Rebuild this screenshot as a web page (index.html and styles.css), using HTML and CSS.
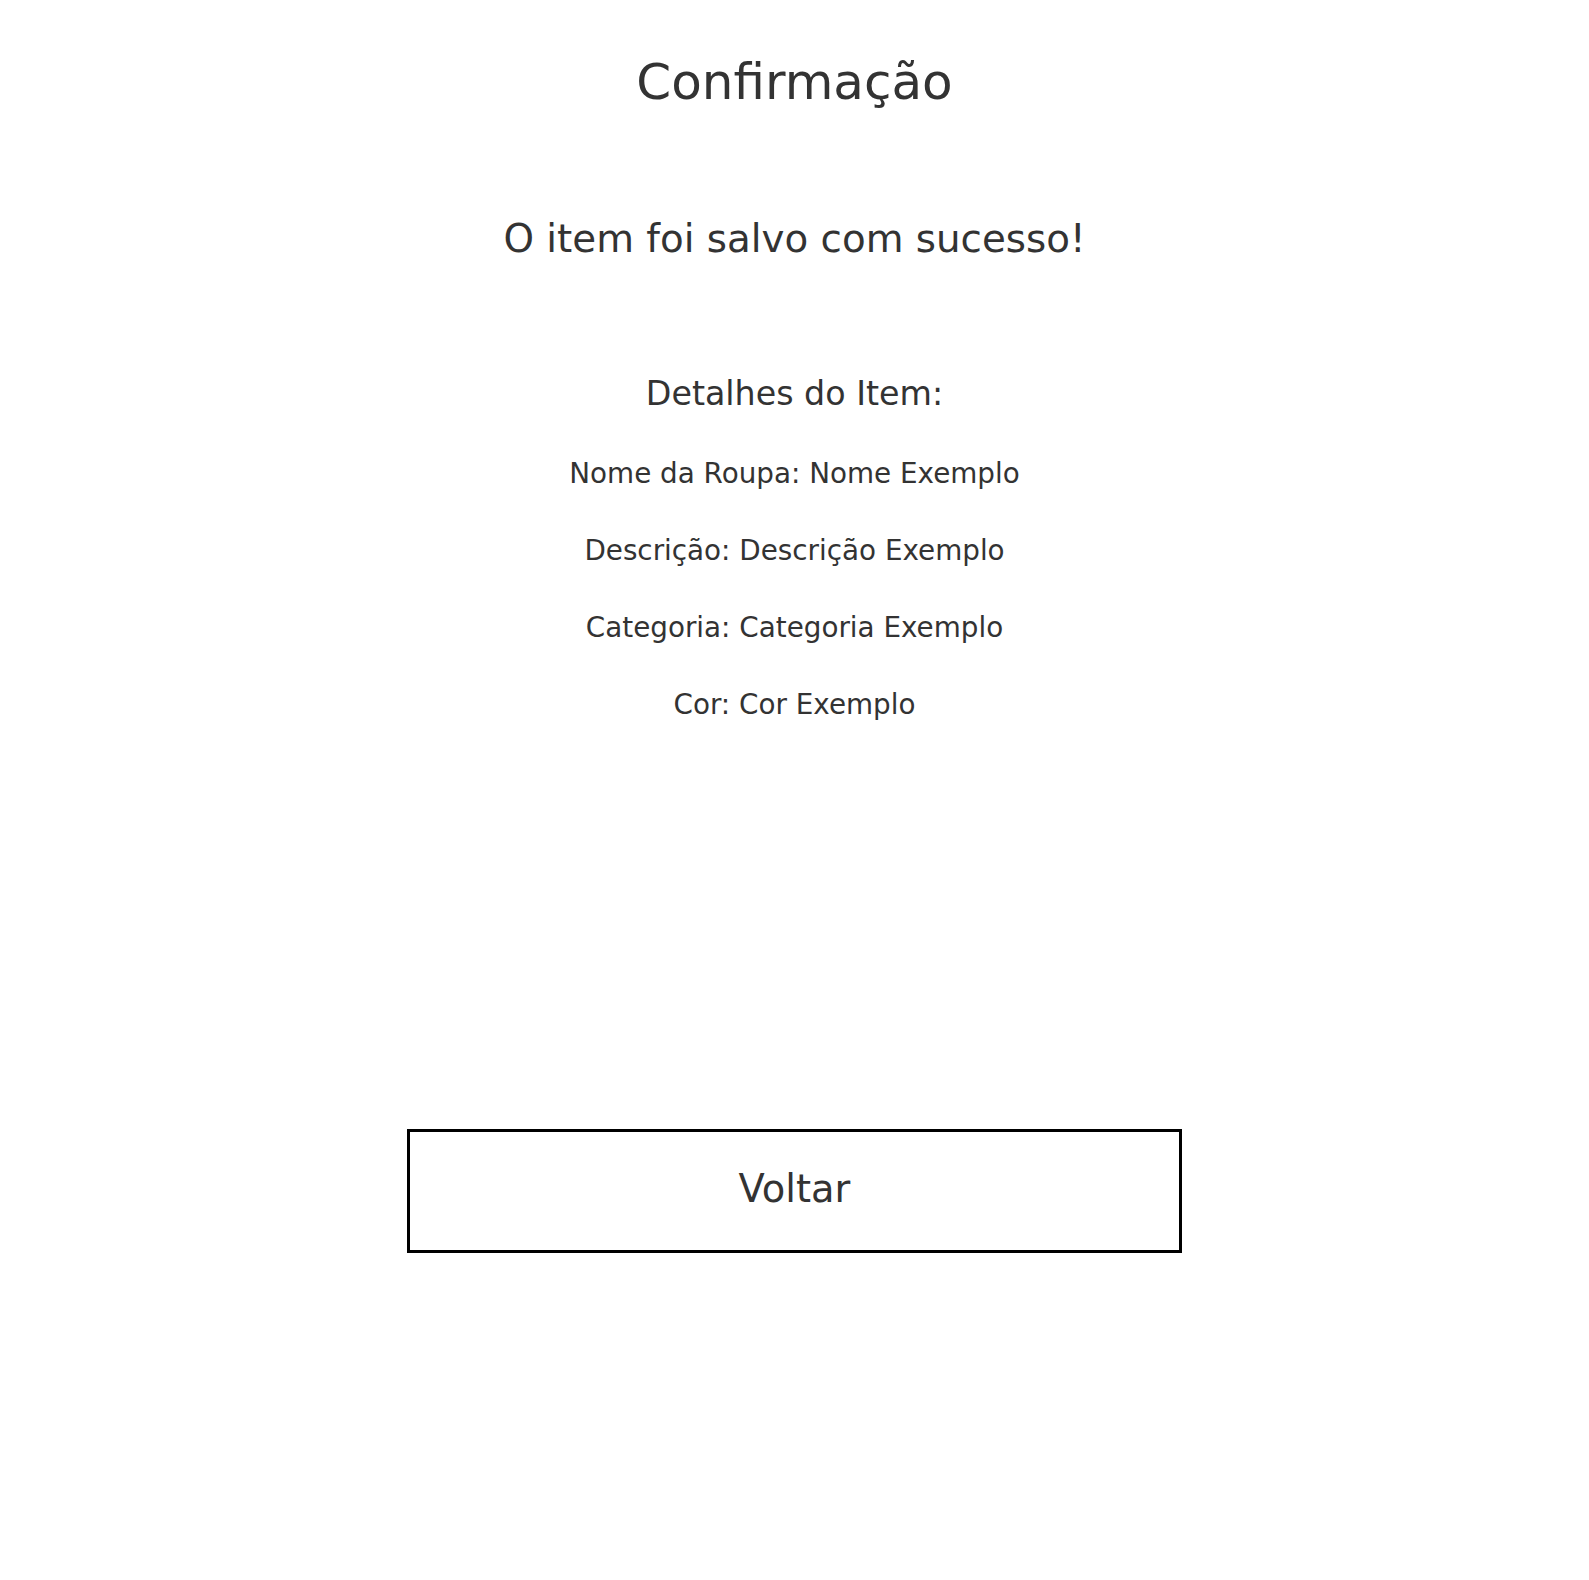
FILE: index.html
```html
<!DOCTYPE html>
<html lang="pt">
<head>
<meta charset="utf-8">
<title>Confirmação</title>
<link rel="stylesheet" href="styles.css">
</head>
<body>
<main class="page">
  <h1 class="title">Confirmação</h1>
  <p class="message">O item foi salvo com sucesso!</p>
  <section class="details">
    <h2 class="details-title">Detalhes do Item:</h2>
    <ul class="details-list">
      <li>Nome da Roupa: Nome Exemplo</li>
      <li>Descrição: Descrição Exemplo</li>
      <li>Categoria: Categoria Exemplo</li>
      <li>Cor: Cor Exemplo</li>
    </ul>
  </section>
  <button class="back-button" type="button">Voltar</button>
</main>
</body>
</html>
```

FILE: styles.css
```css
html, body {
  margin: 0;
  padding: 0;
  background: #ffffff;
}

body {
  font-family: "DejaVu Sans", Verdana, sans-serif;
  color: #333333;
}

.page {
  display: flex;
  flex-direction: column;
  align-items: center;
  text-align: center;
  padding-top: 52px;
}

.title {
  margin: 0;
  font-size: 50px;
  font-weight: normal;
  line-height: 60px;
}

.message {
  margin: 102px 0 0;
  font-size: 38.8px;
  line-height: 50px;
}

.details {
  margin-top: 110px;
  display: flex;
  flex-direction: column;
  align-items: center;
}

.details-title {
  margin: 0;
  font-size: 33.3px;
  font-weight: normal;
  line-height: 40px;
}

.details-list {
  list-style: none;
  margin: 42px 0 0;
  padding: 0;
  display: flex;
  flex-direction: column;
  gap: 42px;
}

.details-list li {
  font-size: 27.8px;
  line-height: 35px;
}

.back-button {
  margin-top: 407px;
  width: 775px;
  height: 124px;
  border: 3px solid #000000;
  background: #ffffff;
  color: #333333;
  font-family: "DejaVu Sans", Verdana, sans-serif;
  font-size: 38.4px;
  padding: 0 0 5px;
  cursor: pointer;
}
```
